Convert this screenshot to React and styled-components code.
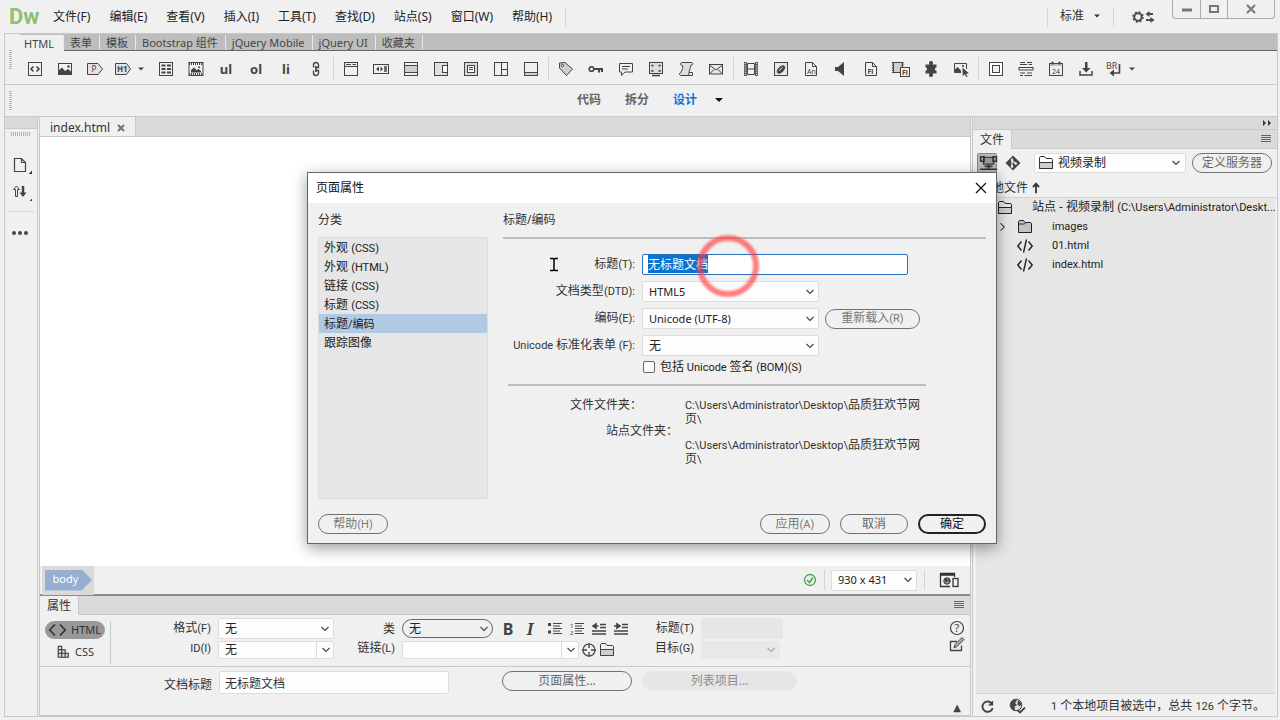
import React, { useEffect, useRef, useState } from 'react';
import styled, { createGlobalStyle } from 'styled-components';

const menus = ['文件(F)', '编辑(E)', '查看(V)', '插入(I)', '工具(T)', '查找(D)', '站点(S)', '窗口(W)', '帮助(H)'];
const insertTabs = ['HTML', '表单', '模板', 'Bootstrap 组件', 'jQuery Mobile', 'jQuery UI', '收藏夹'];
const views = ['代码', '拆分', '设计'];

const tools = [
  ['code', 'image', 'paragraph', 'heading', 'table', 'figure', 'ul', 'ol', 'li', 'link'],
  ['header', 'nav', 'main', 'aside', 'article', 'section', 'footer'],
  ['tag', 'key', 'comment', 'viewport', 'script', 'mail'],
  ['film', 'edge', 'animate', 'sound', 'flash', 'flashVideo', 'plugin', 'rollover'],
  ['div', 'rule', 'date', 'save', 'br'],
];

const categories = [
  ['外观', '(CSS)'],
  ['外观', '(HTML)'],
  ['链接', '(CSS)'],
  ['标题', '(CSS)'],
  ['标题', '/编码'],
  ['跟踪图像', ''],
];

const icons = {
  code: <>
    <rect x="1.5" y="1.5" width="13" height="13" />
    <path d="M6.5 5.5 4 8l2.5 2.5M9.5 5.5 12 8l-2.5 2.5" strokeWidth="1.6" />
  </>,
  image: <>
    <rect x="1.5" y="2.5" width="13" height="11" />
    <path d="M2 13V9l3-2.5L8 10l3-2 3.500 3V13z" fill="currentColor" stroke="none" />
    <circle cx="11.500" cy="5.500" r="1.200" fill="currentColor" stroke="none" />
  </>,
  paragraph: <>
    <path d="M.5 2.500h10.500L15.500 8 11 13.500H.5z" fill="#e2e2e2" />
    <text x="4.500" y="11">P</text>
  </>,
  heading: <>
    <path d="M.5 2.500h11L15.500 8l-4 5.500H.5z" fill="#e2e2e2" />
    <text x="2" y="11" fontWeight="700">H1</text>
  </>,
  table: <>
    <rect x="1.500" y="1.500" width="13" height="13" />
    <path d="M3.500 4.500h4M9 4.500h4M3.500 8h4M9 8h4M3.500 11.500h4M9 11.500h4" strokeWidth="1.800" />
  </>,
  figure: <>
    <rect x="1" y="1.500" width="14" height="13" />
    <path d="M1 3h14M1 13h14" strokeWidth="2" strokeDasharray="1 1" />
    <path d="M3 11.500V9l3-2.500 2.500 2.500 2-1 2.500 2v1.500z" fill="currentColor" stroke="none" />
    <circle cx="11" cy="6.300" r="1" fill="currentColor" stroke="none" />
  </>,
  link: <>
    <path d="M5.500 6.500V4a2.500 2.500 0 0 1 5 0v2.500H9M5.500 9.500V12a2.500 2.500 0 0 0 5 0V9.500H9" strokeWidth="1.400" />
    <path d="M8 5v6" strokeWidth="1.800" />
  </>,
  header: <>
    <rect x="1.500" y="1.500" width="13" height="13" />
    <path d="M1.500 5.500h13M3 3.500h5M9.500 3.500h3.500" />
  </>,
  nav: <>
    <rect x=".5" y="3.500" width="15" height="9" />
    <path d="M6 5.500v5L3 8zM7.500 5.500v5L10 8z" fill="currentColor" stroke="none" />
    <path d="M11 6h3M11 8h3M11 10h3" strokeWidth="1.300" />
  </>,
  main: <>
    <rect x="1.500" y="1.500" width="13" height="13" />
    <rect x="1.500" y="4.500" width="13" height="7" fill="#cfcfcf" />
  </>,
  aside: <>
    <rect x="1.500" y="1.500" width="13" height="13" fill="#e0e0e0" />
    <rect x="9.500" y="4.500" width="5" height="7" fill="#fafafa" />
  </>,
  article: <>
    <rect x="1.500" y="1.500" width="13" height="13" fill="#d8d8d8" />
    <rect x="4.500" y="4.500" width="7" height="7" fill="#fff" />
    <path d="M6 6.500h4M6 8.500h4" />
  </>,
  section: <>
    <rect x="1.500" y="1.500" width="13" height="13" />
    <path d="M8.500 1.500v13M8.500 8.500h6" />
  </>,
  footer: <>
    <rect x="1.500" y="1.500" width="13" height="13" />
    <path d="M2 11.500h12V14H2z" fill="#cfcfcf" stroke="none" />
    <path d="M1.500 11.500h13" />
  </>,
  tag: <>
    <path d="M1.500 2v5l7 7.500L14.500 8 7 1.500z" fill="#cfcfcf" />
    <circle cx="4.500" cy="4.500" r="1.200" fill="#f0f0f0" />
  </>,
  key: <>
    <circle cx="3.500" cy="8" r="2.300" strokeWidth="1.600" />
    <path d="M6 8h9M11 8v3.500M14 8v3" strokeWidth="2" />
  </>,
  comment: <>
    <path d="M1.500 2.500h13v8.500H7l-3.500 3.500V11h-2z" />
    <path d="M4 5.500h8M4 8h6" />
  </>,
  viewport: <>
    <rect x="1.500" y="1.500" width="13" height="11" fill="#dedede" />
    <path d="M4 5.500v-1h1.500M10.500 4.500H12v1M12 9v1h-1.500M5.500 10H4V9M4 14.500h8" strokeWidth="1.300" />
  </>,
  script: <>
    <path d="M4 1.500h9.500c2 0 1.500 3-.5 2.500-.5 3-2 6-2 8 0 3-2 2.500-2.500 2.500H3c-2 0-2-3 0-3 1-3 2.500-5 1.500-7C2 5 2 1.500 4 1.500z" fill="#dedede" />
    <path d="M11 11.500h3.500v3H8" />
  </>,
  mail: <>
    <rect x="1.500" y="3.500" width="13" height="9.500" fill="#e6e6e6" />
    <path d="M2 4.500 8 9l6-4.500M2 12.500l4-4M14 12.500l-4-4" />
  </>,
  film: <>
    <path d="M4.500 2.500h7v11h-7zM4.500 8h7" />
    <path d="M2.500 1v14M13.500 1v14" strokeWidth="2.600" />
    <path d="M2.500 2v13M13.500 2v13" stroke="#f0f0f0" strokeWidth="1" strokeDasharray="1 1.200" />
  </>,
  edge: <>
    <rect x="1.500" y="1.500" width="13" height="13" fill="#e6e6e6" />
    <ellipse cx="8" cy="8.500" rx="4.500" ry="2.300" transform="rotate(-45 8 8.500)" fill="currentColor" />
    <path d="m6 10 3.500-4" stroke="#e6e6e6" />
  </>,
  animate: <>
    <path d="M2.500 1.500h7l4 4v9h-11zM9.500 1.500v4h4" />
    <text x="4" y="13" fontSize="7">An</text>
  </>,
  sound: <path d="M2 6h3l6-5v14l-6-5H2z" fill="currentColor" stroke="none" />,
  flash: <>
    <path d="M2.500 1.500h7l4 4v9h-11zM9.500 1.500v4h4" />
    <text x="4.500" y="13" fontSize="7" fontWeight="700">Fl</text>
  </>,
  flashVideo: <>
    <rect x="1.500" y="1.500" width="9" height="10" fill="#cfcfcf" />
    <path d="M1 1v11M10.500 1v6" strokeWidth="2" strokeDasharray="1.500 1" />
    <rect x="8.500" y="6.500" width="9" height="9" fill="#f0f0f0" />
    <text x="10" y="14" fontSize="7" fontWeight="700">Fl</text>
  </>,
  plugin: <path d="M8 0C6 0 5.500 2 6.500 3.500H2.500v3c2-.8 2 3.800 0 3v3h4C5.500 14 6 16 8 16s2.500-2 1.500-3.500h4v-3c-2 .8-2-3.800 0-3v-3h-4C10.500 2 10 0 8 0z" fill="currentColor" stroke="none" />,
  rollover: <>
    <path d="M8 11.500H1.500v-9h12V8" />
    <path d="M2 11V8.500L4.500 6 8 9.500V11z" fill="currentColor" stroke="none" />
    <circle cx="10" cy="5" r="1.100" fill="currentColor" stroke="none" />
    <path d="m9.500 6.500 6.500 6-3 .3 1.500 2.700-1.300.5-1.500-2.700-2 1.700z" fill="currentColor" stroke="none" />
  </>,
  div: <>
    <rect x="1.500" y="1.500" width="13" height="13" fill="#fff" />
    <rect x="4.500" y="4.500" width="7" height="7" fill="#f0f0f0" />
  </>,
  rule: <>
    <path d="M2 1.500h5M9 1.500h5M2 3.500h7M10.500 3.500H14M2 12h5M9 12h5M2 14.500h3M6.500 14.500H14" />
    <rect x="1" y="6.500" width="14" height="2.500" />
  </>,
  date: <>
    <rect x="1.500" y="2.500" width="13" height="12" />
    <path d="M2 4h12" stroke="#c4c4c4" strokeWidth="2" />
    <path d="M4.500.500v3M11.500.500v3" strokeWidth="1.800" />
    <text x="4" y="12.500" fontSize="7">24</text>
  </>,
  save: <>
    <path d="M2 10v4h12v-4" strokeWidth="1.500" />
    <path d="M7 1h2.500v6h3L8.200 11.500 4 7h3z" fill="currentColor" stroke="none" />
  </>,
  br: <>
    <text x="0" y="8" fontSize="9">BR</text>
    <path d="M13.500 3v9H6" strokeWidth="1.600" />
    <path d="M8 8.500v7L3.500 12z" fill="currentColor" stroke="none" />
  </>,
  page: <path d="M2.500 1.500h7l4 4v9h-11zM9.500 1.500v4h4" strokeWidth="1.200" />,
  transfer: <>
    <path d="M3.500 12.500v-7h-2L4.500 2l3 3.500h-2v7z" />
    <path d="M11 2v7" strokeWidth="2.500" />
    <path d="M7.500 8.500h7L11 13z" fill="currentColor" stroke="none" />
  </>,
  gear: <>
    <circle cx="6" cy="8" r="3.700" strokeWidth="2" />
    <circle cx="6" cy="8" r="5" strokeWidth="1.500" strokeDasharray="2 1.930" />
    <path d="M16 5h5M14 11h5" strokeWidth="2" />
    <path d="M17.500 2v6l-4-3zM18.500 8v6l4-3z" fill="currentColor" stroke="none" />
  </>,
  server: <>
    <rect x="4" y="3" width="9" height="6" fill="#999" />
    <path d="M1.500 2.500h3v4h-3zM12.500 2.500h3v4h-3zM8.500 9v4.500M5 11h7M1 13.500h15" strokeWidth="1.400" />
  </>,
  git: <>
    <path d="m8 .5 7.500 7.500L8 15.500.5 8z" fill="currentColor" stroke="none" />
    <path d="M7 3.500v9M7 5.500l3.500 3" stroke="#eee" strokeWidth="1.200" />
    <g fill="#eee" stroke="none"><circle cx="7" cy="5" r="1.200" /><circle cx="7" cy="11.500" r="1.200" /><circle cx="10.800" cy="8.500" r="1.200" /></g>
  </>,
  folder: <>
    <path d="M1.500 13.500V3c0-1 .5-1.500 1.500-1.500h3.500l1.500 2h5c1 0 1.500.5 1.500 1.500v8.500z" />
    <path d="M1.500 7.500h13v6h-13z" fill="#cfcfcf" />
  </>,
  folderGray: <path d="M1.500 13.500V3c0-1 .5-1.500 1.500-1.500h3.500l1.500 2h5c1 0 1.500.5 1.500 1.500v8.500zM2 5h5.500L9 3.500" fill="#c2c2c2" />,
  tags: <path d="M4.500 3.500.8 8l3.700 4.500M11.500 3.500 15.200 8l-3.700 4.500M9.500 1.500l-3 13" strokeWidth="1.400" />,
  refresh: <>
    <path d="M13 5.500A5.500 5.500 0 1 0 13.500 9.500" strokeWidth="2" />
    <path d="M14 1.500v5.500H8.500z" fill="currentColor" stroke="none" />
  </>,
  globe: <>
    <circle cx="7" cy="7" r="5.800" fill="#ddd" />
    <path d="M1.500 5 5 1.500l3 1L6 5l2 2-2.500 1.500L6 11l-1 1.500Q1.500 10.500 1.500 5zM9 2l3.500 3.500-1.500 3-2.500-2z" fill="currentColor" stroke="none" />
    <path d="m8.500 12 2.500 2.500 5-5" strokeWidth="1.800" />
  </>,
  html: <path d="M6 2.500.800 8 6 13.500M11 2.500 16.200 8 11 13.500" strokeWidth="1.700" />,
  css: <path d="M2.500 1.500h4v12.500h-4zM2.500 5.500h8V14M2.500 9.500H14V14H2.500" fill="#dadada" strokeWidth="1.200" />,
  ulist: <>
    <path d="M1 3.500h3M1 11h3" strokeWidth="3" />
    <path d="M6 2.500h9M6 5h7M6 7.500h9M6 10h7M6 12.500h9" strokeWidth="1.200" />
  </>,
  olist: <>
    <path d="M6 2.500h9M6 5h7M6 7.500h9M6 10h7M6 12.500h9" strokeWidth="1.200" />
    <text x="1" y="7" fontSize="6">1</text><text x="1" y="14" fontSize="6">2</text>
  </>,
  outdent: <path d="M9 3.500h6M9 6.500h6M1 10h14M1 13h14M2 5h5.500M5 3v4L2 5z" strokeWidth="1.600" />,
  indent: <path d="M9 3.500h6M9 6.500h6M1 10h14M1 13h14M1 5h5.500M4 3v4l3-2z" strokeWidth="1.600" />,
  target: <>
    <circle cx="8" cy="8" r="6" strokeWidth="1.200" />
    <path d="M8 1v5M8 10v5M1 8h5M10 8h5" strokeWidth="1.400" />
  </>,
  help: <>
    <circle cx="8" cy="8" r="6.500" strokeWidth="1.200" />
    <text x="5.500" y="12" fontSize="11">?</text>
  </>,
  edit: <>
    <path d="M8 5.500H1.500v9h11V9.500" strokeWidth="1.300" />
    <path d="m5 12 1-3.500L13 1.500l2 2-7 7z" fill="#aaa" />
  </>,
  device: <>
    <path d="M11 14.500H1.500v-13h14V5" strokeWidth="1.300" />
    <path d="M1 2.500h15" strokeWidth="2.500" />
    <circle cx="8" cy="9" r="3.200" fill="#999" />
    <path d="m5.500 8 2-1.500 1 1.500-1 2.500zM9 7l2 1.500-1.500 2z" fill="currentColor" stroke="none" />
    <rect x="14" y="6.500" width="5" height="8" fill="#f0f0f0" strokeWidth="1.300" />
  </>,
  check: <>
    <circle cx="8" cy="8" r="5.500" strokeWidth="1.300" />
    <path d="m5 8 2.500 2.500L11 5.500" strokeWidth="1.500" />
  </>,
  chevron: <path d="m4.500 6 3.500 3.500L11.500 6" strokeWidth="1.100" />,
  close: <path d="m3 3 10 10M13 3 3 13" strokeWidth="1.300" />,
  smallClose: <path d="m5 5 6 6M11 5l-6 6" strokeWidth="2.200" />,
  up: <path d="M8 14V4M4.500 7 8 3l3.500 4" strokeWidth="2" />,
  menu: <path d="M3 4.500h10M3 6.500h10M3 8.500h10M3 10.500h10" />,
  more: <path d="m4 5 3 3-3 3zM9 5l3 3-3 3z" fill="currentColor" stroke="none" />,
  right: <path d="m6 3 5 5-5 5" strokeWidth="1.400" />,
  dots: <path d="M0 8h16" strokeWidth="4" strokeLinecap="round" strokeDasharray="0 6" transform="translate(2 0)" />,
  caret: <path d="M4 6h8l-4 4z" fill="currentColor" stroke="none" />,
  minimize: <path d="M3 9h10" strokeWidth="3" />,
  maximize: <rect x="4" y="5" width="8" height="6" strokeWidth="2" />,
  xmark: <path d="m4 4 8 8M12 4l-8 8" strokeWidth="2" />,
  ibeam: <path d="M4 2.500h3l1 1 1-1h3M8 3.500v10M4 14.500h3l1-1 1 1h3" stroke="#000" strokeWidth="1.500" />,
};

function Icon({ name, width = 16, size = 16, className }) {
  return <Svg className={className} width={width * size / 16} height={size} viewBox={`0 0 ${width} 16`} aria-hidden="true">
    {icons[name]}
  </Svg>
}

function Select({ label, options, ...rest }) {
  return <SelectWrap {...rest}>
    <select aria-label={label} disabled={rest.$off}>
      {options.map(o => <option key={o}>{o}</option>)}
    </select>
    <span className="arrow"><Icon name="chevron" /></span>
  </SelectWrap>
}

function ToolButton({ name }) {
  const dropdown = name === 'heading' || name === 'br'
  if (['ul', 'ol', 'li'].includes(name)) return <Tool><b>{name}</b></Tool>
  return <Tool $wide={dropdown} aria-label={name}>
    <Icon name={name} width={name === 'flashVideo' ? 18 : 16} />
    {dropdown && <Icon name="caret" size={12} />}
  </Tool>
}

function PageProperties() {
  const [active, setActive] = useState(4)
  const title = useRef(null)

  useEffect(() => {
    title.current.focus()
    title.current.select()
  }, [])

  return <Dialog role="dialog" aria-label="页面属性">
    <DialogTitle>
      <span>页面属性</span>
      <IconButton aria-label="关闭"><Icon name="close" /></IconButton>
    </DialogTitle>
    <DialogBody>
      <div>
        <Heading>分类</Heading>
        <CategoryList>
          {categories.map(([name, suffix], i) => (
            <Category key={name + suffix} $active={i === active} onClick={() => setActive(i)}>
              {name}{suffix.startsWith('(') && ' '}<Latin>{suffix}</Latin>
            </Category>
          ))}
        </CategoryList>
      </div>
      <div>
        <Heading>标题/编码</Heading>
        <Rule />
        <Form>
          <label htmlFor="doc-title">标题<Latin>(T):</Latin></label>
          <TitleInput id="doc-title" ref={title} defaultValue="无标题文档" />
          <span>文档类型<Latin>(DTD):</Latin></span>
          <Select label="文档类型" options={['HTML5']} $width={177} $latin />
          <span>编码<Latin>(E):</Latin></span>
          <Inline>
            <Select label="编码" options={['Unicode (UTF-8)']} $width={177} $latin />
            <PillButton $width={95} $soft>重新载入<Latin>(R)</Latin></PillButton>
          </Inline>
          <span><Latin>Unicode </Latin>标准化表单<Latin> (F):</Latin></span>
          <Select label="标准化表单" options={['无']} $width={177} />
        </Form>
        <CheckRow>
          <input type="checkbox" />
          <span>包括<Latin> Unicode </Latin>签名<Latin> (BOM)(S)</Latin></span>
        </CheckRow>
        <Rule $inset />
        <Folders>
          <dt>文件文件夹：</dt>
          <dd>
            <div><Latin>C:\Users\Administrator\Desktop\</Latin>品质狂欢节网</div>
            <div>页<Latin>\</Latin></div>
          </dd>
          <dt className="site">站点文件夹：</dt>
          <dd>
            <div><Latin>C:\Users\Administrator\Desktop\</Latin>品质狂欢节网</div>
            <div>页<Latin>\</Latin></div>
          </dd>
        </Folders>
      </div>
    </DialogBody>
    <DialogFooter>
      <PillButton $width={70} $soft>帮助<Latin>(H)</Latin></PillButton>
      <Spacer />
      <PillButton $width={70} $soft>应用<Latin>(A)</Latin></PillButton>
      <PillButton $width={68}>取消</PillButton>
      <PillButton $width={68} $primary>确定</PillButton>
    </DialogFooter>
    <Cursor><Icon name="ibeam" /></Cursor>
    <ClickRing />
  </Dialog>
}

function FilesPanel() {
  return <Files>
    <FilesStrip><Icon name="more" /></FilesStrip>
    <PanelTabs><PanelTab>文件</PanelTab><Spacer /><Icon name="menu" /></PanelTabs>
    <FilesBar>
      <Pressed aria-label="server"><Icon name="server" width={17} size={18} /></Pressed>
      <IconButton aria-label="git"><Icon name="git" /></IconButton>
      <SiteSelect>
        <Icon name="folder" />
        <Select label="站点" options={['视频录制']} $site />
      </SiteSelect>
      <PillButton $width={80}>定义服务器</PillButton>
    </FilesBar>
    <FilesHeader><span>本地文件</span><Icon name="up" size={14} /></FilesHeader>
    <Tree>
      <TreeRow $root><Icon name="folder" /><span>站点 - 视频录制 <Latin>(C:\Users\Administrator\Deskt...</Latin></span></TreeRow>
      <TreeRow><Icon name="right" size={12} /><Icon name="folderGray" /><Latin>images</Latin></TreeRow>
      <TreeRow><i /><Icon name="tags" /><Latin>01.html</Latin></TreeRow>
      <TreeRow><i /><Icon name="tags" /><Latin>index.html</Latin></TreeRow>
    </Tree>
    <FilesStatus>
      <IconButton aria-label="刷新"><Icon name="refresh" size={15} /></IconButton>
      <IconButton aria-label="globe"><Icon name="globe" width={17} /></IconButton>
      <span><Latin>1</Latin> 个本地项目被选中，总共 <Latin>126</Latin> 个字节。</span>
    </FilesStatus>
  </Files>
}

function PropertiesPanel() {
  return <Properties>
    <PanelTabs><PanelTab>属性</PanelTab><Spacer /><Icon name="menu" /></PanelTabs>
    <PropertyRow>
      <Modes>
        <Mode $active><Icon name="html" width={17} />HTML</Mode>
        <Mode><Icon name="css" size={14} />CSS</Mode>
      </Modes>
      <FieldGroup $label={100}>
        <span>格式<Latin>(F)</Latin></span>
        <Select label="格式" options={['无']} $width={116} />
        <span><Latin>ID(I)</Latin></span>
        <Select label="ID" options={['无']} $width={116} $split $short />
      </FieldGroup>
      <FieldGroup $label={61}>
        <span>类</span>
        <Inline>
          <Select label="类" options={['无']} $width={91} $round />
          <TextTools>
            <IconButton><b>B</b></IconButton>
            <IconButton><em>I</em></IconButton>
            <IconButton aria-label="ul"><Icon name="ulist" /></IconButton>
            <IconButton aria-label="ol"><Icon name="olist" /></IconButton>
            <IconButton aria-label="outdent"><Icon name="outdent" /></IconButton>
            <IconButton aria-label="indent"><Icon name="indent" /></IconButton>
          </TextTools>
        </Inline>
        <span>链接<Latin>(L)</Latin></span>
        <Inline $gap={2}>
          <Select label="链接" options={['']} $width={177} $split $short />
          <IconButton aria-label="target"><Icon name="target" /></IconButton>
          <IconButton aria-label="folder"><Icon name="folder" /></IconButton>
        </Inline>
      </FieldGroup>
      <FieldGroup $label={65}>
        <label htmlFor="link-title">标题<Latin>(T)</Latin></label>
        <DisabledInput id="link-title" disabled />
        <span>目标<Latin>(G)</Latin></span>
        <Select label="目标" options={['']} $width={79} $off $short />
      </FieldGroup>
      <Spacer />
      <SideIcons>
        <IconButton aria-label="帮助"><Icon name="help" /></IconButton>
        <IconButton aria-label="编辑"><Icon name="edit" /></IconButton>
      </SideIcons>
    </PropertyRow>
    <DocumentRow>
      <label htmlFor="page-title">文档标题</label>
      <PageTitle id="page-title" defaultValue="无标题文档" />
      <PillButton $width={130}>页面属性...</PillButton>
      <PillButton $width={155} disabled>列表项目...</PillButton>
      <Spacer />
      <IconButton className="collapse" aria-label="collapse">▲</IconButton>
    </DocumentRow>
  </Properties>
}

function App() {
  const [view, setView] = useState('设计')

  return <>
    <GlobalStyle />
    <Shell>
      <TitleBar>
        <Logo>Dw</Logo>
        <Menu>{menus.map(m => <button key={m}>{m}</button>)}</Menu>
        <Divider $height={20} />
        <Spacer />
        <Divider $height={20} />
        <Workspace>标准<Icon name="caret" size={12} /></Workspace>
        <Divider $height={20} />
        <Settings aria-label="settings"><Icon name="gear" width={24} /></Settings>
        <WindowButtons>
          <button aria-label="最小化"><Icon name="minimize" /></button>
          <button aria-label="最大化"><Icon name="maximize" /></button>
          <button className="wide" aria-label="关闭"><Icon name="xmark" /></button>
        </WindowButtons>
      </TitleBar>
      <Workbench>
        <InsertPanel>
          <Grip />
          <InsertBody>
            <InsertTabs>
              {insertTabs.map((t, i) => <InsertTab key={t} $active={i === 0}>{t}</InsertTab>)}
            </InsertTabs>
            <Toolbar>
              {tools.map((group, i) => <React.Fragment key={i}>
                {i > 0 && <Divider $height={23} $space={2} />}
                {group.map(t => <ToolButton key={t} name={t} />)}
              </React.Fragment>)}
            </Toolbar>
          </InsertBody>
        </InsertPanel>
        <ViewBar>
          <Grip />
          <nav>
            {views.map(v => <ViewButton key={v} $active={v === view} onClick={() => setView(v)}>{v}</ViewButton>)}
            <IconButton aria-label="视图"><Icon name="caret" /></IconButton>
          </nav>
        </ViewBar>
        <Main>
          <SideTools>
            <div className="strip" />
            <div className="grip" />
            <button className="corner" aria-label="打开文档"><Icon name="page" /></button>
            <button className="corner" aria-label="文件管理"><Icon name="transfer" /></button>
            <hr />
            <button aria-label="自定义"><Icon name="dots" width={18} /></button>
          </SideTools>
          <Center>
            <DocTabs><DocTab>index.html<Icon name="smallClose" /></DocTab></DocTabs>
            <Canvas />
            <StatusBar>
              <TagCrumb><button>body</button></TagCrumb>
              <Spacer />
              <Ok><Icon name="check" /></Ok>
              <Divider $height={20} $space={6} />
              <Select label="窗口大小" options={['930 x 431']} $width={86} $latin />
              <Divider $height={20} $space={7} />
              <Preview aria-label="预览"><Icon name="device" width={19} /></Preview>
            </StatusBar>
            <PropertiesPanel />
          </Center>
          <FilesPanel />
        </Main>
      </Workbench>
      <PageProperties />
    </Shell>
  </>
}

export default App;

const GlobalStyle = createGlobalStyle`
  *{
    box-sizing: border-box;
  }
  body{
    margin: 0;
    background: #f0f0f0;
    color: #333;
    font: 12px/16px "Noto Sans", "Noto Sans CJK SC", sans-serif;
  }
  button, input, select{
    font: inherit;
    color: inherit;
    padding: 0;
    margin: 0;
  }
  button{
    border: 0;
    background: none;
    white-space: nowrap;
  }
`

const Svg = styled.svg`
  flex: none;
  display: block;
  fill: none;
  stroke: currentColor;
  overflow: visible;
  text{
    fill: currentColor;
    stroke: none;
    font-family: "Noto Sans", sans-serif;
    font-size: 8px;
  }
  text[font-size="6"]{ font-size: 6px; }
  text[font-size="7"]{ font-size: 7px; }
  text[font-size="9"]{ font-size: 9px; }
  text[font-size="11"]{ font-size: 11px; }
`

const Latin = styled.span`
  font-family: Roboto, "Noto Sans CJK SC", sans-serif;
  font-size: 11px;
  white-space: pre;
`

const Spacer = styled.div`
  flex: 1;
`

const Divider = styled.div`
  flex: none;
  width: 1px;
  height: ${p => p.$height}px;
  margin: 0 ${p => p.$space || 0}px;
  background: #d4d4d4;
`

const Inline = styled.div`
  display: flex;
  align-items: center;
  gap: ${p => p.$gap || 6}px;
`

const IconButton = styled.button`
  display: flex;
  align-items: center;
  justify-content: center;
  color: #444;
`

const PillButton = styled.button`
  width: ${p => p.$width}px;
  height: 20px;
  line-height: 16px;
  border: ${p => p.$primary ? '2px solid #222' : '1px solid #707070'};
  border-radius: 10px;
  color: ${p => p.$primary ? '#111' : p.$soft ? '#777' : '#666'};
  &:disabled{
    border-color: #e6e6e6;
    background: #e6e6e6;
    color: #8c8c8c;
  }
`

const SelectWrap = styled.div`
  position: relative;
  width: ${p => p.$width ? p.$width + 'px' : '100%'};
  select{
    appearance: none;
    display: block;
    width: 100%;
    height: ${p => p.$short ? 18 : 21}px;
    padding: 0 24px 0 ${p => p.$site ? 4 : 6}px;
    border: 1px solid ${p => p.$round ? '#666' : '#dcdcdc'};
    border-radius: ${p => p.$round ? 10 : 2}px;
    background: ${p => p.$round ? '#f0f0f0' : '#fdfdfd'};
    outline: 0;
    color: #222;
    ${p => p.$latin && 'font-size: 11px;'}
    ${p => p.$round && 'height: 19px;'}
    ${p => p.$site && 'border: 0; background: none; height: 18px;'}
    ${p => p.$off && 'background: #e6e6e6; border-color: #e6e6e6;'}
  }
  .arrow{
    position: absolute;
    top: 0;
    right: 0;
    bottom: 0;
    width: 18px;
    display: flex;
    align-items: center;
    justify-content: center;
    border-left: ${p => p.$split ? '1px solid #dcdcdc' : '0'};
    color: ${p => p.$off ? '#aaa' : '#444'};
    pointer-events: none;
  }
`

const Shell = styled.div`
  position: relative;
  display: flex;
  flex-direction: column;
  height: 100vh;
  padding: 0 2px 3px 4px;
  overflow: hidden;
`

const TitleBar = styled.header`
  flex: none;
  display: flex;
  align-items: center;
  height: 33px;
  padding-left: 5px;
`

const Logo = styled.div`
  width: 44px;
  color: #8fbf73;
  font: bold 22px/30px Roboto, sans-serif;
`

const Menu = styled.nav`
  display: flex;
  gap: 19px;
  margin-right: 13px;
  button{
    color: #222;
  }
`

const Workspace = styled.button`
  display: flex;
  align-items: center;
  gap: 7px;
  width: 65px;
  padding: 0 0 2px 12px;
`

const Settings = styled.button`
  width: 58px;
  padding-left: 18px;
  color: #4a4a4a;
`

const WindowButtons = styled.div`
  display: flex;
  align-self: flex-start;
  height: 19px;
  margin-right: 3px;
  border: 1px solid #aaa;
  border-top: 0;
  border-radius: 0 0 4px 4px;
  button{
    width: 27px;
    display: flex;
    justify-content: center;
    align-items: center;
    color: #777;
    border-left: 1px solid #aaa;
    &:first-child{
      border: 0;
    }
    &.wide{
      width: 47px;
    }
  }
`

const Workbench = styled.div`
  flex: 1;
  min-height: 0;
  display: flex;
  flex-direction: column;
  border: 1px solid #c8c8c8;
`

const InsertPanel = styled.section`
  flex: none;
  display: flex;
  height: 51px;
  border-bottom: 1px solid #c8c8c8;
`

const Grip = styled.div`
  align-self: center;
  width: 3px;
  height: 19px;
  margin: 0 8px 0 4px;
  background: repeating-linear-gradient(#b4b4b4 0 1px, #f0f0f0 1px 2px);
`

const InsertBody = styled.div`
  flex: 1;
  min-width: 0;
`

const InsertTabs = styled.div`
  display: flex;
  height: 17px;
  padding-top: 1px;
  background: #bdbdbd;
  border-bottom: 1px solid #666;
`

const InsertTab = styled.button`
  height: ${p => p.$active ? 16 : 15}px;
  padding: ${p => p.$active ? '0 9px 0 4px' : '0 7px 0 6px'};
  border-right: 1px solid #e8e8e8;
  background: ${p => p.$active ? '#f0f0f0' : 'transparent'};
  color: #444;
  font-size: 11px;
  line-height: 15px;
`

const Toolbar = styled.div`
  display: flex;
  align-items: center;
  height: 33px;
  padding-top: 2px;
`

const Tool = styled.button`
  display: flex;
  align-items: center;
  justify-content: center;
  gap: 4px;
  width: ${p => p.$wide ? 41 : 30}px;
  height: 24px;
  color: #444;
  b{
    font: bold 13px/24px "Noto Sans", sans-serif;
  }
`

const ViewBar = styled.section`
  flex: none;
  display: flex;
  height: 32px;
  border-bottom: 1px solid #c8c8c8;
  nav{
    flex: 1;
    display: flex;
    justify-content: center;
    align-items: center;
    gap: 24px;
    padding: 0 0 2px 7px;
  }
`

const ViewButton = styled.button`
  color: ${p => p.$active ? '#1473d6' : '#666'};
  font-weight: 700;
  & + ${IconButton}{
    margin-left: -10px;
    color: #111;
  }
`

const Main = styled.main`
  flex: 1;
  min-height: 0;
  display: flex;
`

const SideTools = styled.aside`
  flex: none;
  width: 33px;
  border-right: 1px solid #c8c8c8;
  color: #444;
  .strip{
    height: 12px;
    background: #dadada;
    border-bottom: 1px solid #c8c8c8;
  }
  .grip{
    width: 20px;
    height: 4px;
    margin: 3px 0 15px 6px;
    background: repeating-linear-gradient(90deg, #b4b4b4 0 1px, #f0f0f0 1px 2px);
  }
  button{
    display: block;
    width: 28px;
    height: 27px;
    padding-left: 7px;
  }
  .corner{
    background: linear-gradient(135deg, transparent 50%, #444 50%) 24px 20px / 3px 3px no-repeat;
  }
  hr{
    margin: 6px 3px 7px;
    border: 0;
    border-top: 1px solid #d4d4d4;
  }
`

const Center = styled.div`
  flex: 1;
  min-width: 0;
  display: flex;
  flex-direction: column;
  margin-left: 1px;
  border: solid #c8c8c8;
  border-width: 0 1px;
`

const DocTabs = styled.div`
  flex: none;
  display: flex;
  height: 20px;
  background: #dadada;
  border-bottom: 1px solid #c8c8c8;
`

const DocTab = styled.div`
  display: flex;
  align-items: center;
  gap: 3px;
  padding: 2px 6px 0 10px;
  border-right: 1px solid #c8c8c8;
  background: #f0f0f0;
  svg{
    color: #777;
  }
`

const Canvas = styled.div`
  flex: 1;
  background: #fff;
`

const StatusBar = styled.div`
  flex: none;
  display: flex;
  align-items: center;
  height: 30px;
  border-bottom: 2px solid #8c8c8c;
  padding: 0 2px;
`

const TagCrumb = styled.div`
  padding: 4px 2px 4px 3px;
  background: #dadada;
  button{
    display: block;
    width: 47px;
    height: 21px;
    padding: 0 6px 2px 0;
    background: #96aecf;
    clip-path: polygon(0 0, 78% 0, 100% 50%, 78% 100%, 0 100%);
    color: #fff;
    font-size: 11px;
  }
`

const Ok = styled.span`
  color: #45a845;
`

const Preview = styled.button`
  width: 36px;
  padding-left: 7px;
`

const Properties = styled.section`
  flex: none;
  border-bottom: 1px solid #c8c8c8;
`

const PanelTabs = styled.div`
  flex: none;
  display: flex;
  align-items: center;
  height: 19px;
  padding-right: 3px;
  background: #dadada;
  border-bottom: 1px solid #c8c8c8;
  color: #666;
`

const PanelTab = styled.div`
  height: 19px;
  padding: 2px 7px;
  border-right: 1px solid #c8c8c8;
  background: #f0f0f0;
  color: #333;
`

const PropertyRow = styled.div`
  display: flex;
  height: 52px;
  padding: 3px 5px 0 5px;
  border-bottom: 1px solid #c8c8c8;
`

const Modes = styled.div`
  width: 66px;
  height: 43px;
  margin-top: 3px;
  border-right: 1px solid #c8c8c8;
`

const Mode = styled.button`
  display: flex;
  align-items: center;
  gap: 5px;
  width: 60px;
  height: 18px;
  margin-bottom: 4px;
  padding-left: ${p => p.$active ? 4 : 11}px;
  border-radius: 9px;
  background: ${p => p.$active ? '#999' : 'none'};
  font-size: 11px;
`

const FieldGroup = styled.div`
  display: grid;
  grid-template-columns: ${p => p.$label}px auto;
  grid-template-rows: 21px 19px;
  column-gap: 7px;
  row-gap: 1px;
  align-content: start;
  align-items: center;
  > span, > label{
    align-self: start;
    text-align: right;
    &:first-child{
      align-self: center;
    }
  }
`

const TextTools = styled.div`
  display: flex;
  align-items: center;
  gap: 6px;
  margin-left: 1px;
  ${IconButton}{
    width: 16px;
    &:nth-child(2){
      margin-right: 3px;
    }
  }
  b{
    font: bold 16px/20px "Noto Sans", sans-serif;
  }
  em{
    font: italic bold 16px/20px "Noto Serif", "DejaVu Serif", serif;
  }
`

const DisabledInput = styled.input`
  width: 82px;
  height: 21px;
  border: 0;
  border-radius: 2px;
  background: #e6e6e6;
`

const SideIcons = styled.div`
  padding-top: 2px;
`

const DocumentRow = styled.div`
  display: flex;
  height: 48px;
  padding: 4px 5px 1px 0;
  label{
    width: 172px;
    margin: 6px 7px 0 0;
    text-align: right;
  }
  ${PillButton}{
    margin-right: 10px;
  }
  .collapse{
    align-self: flex-end;
    width: 16px;
    font: 10px/12px "DejaVu Sans", sans-serif;
  }
`

const PageTitle = styled.input`
  width: 230px;
  height: 23px;
  margin: 0 53px 0 0;
  padding: 0 5px;
  border: 1px solid #dcdcdc;
  border-radius: 2px;
  background: #fdfdfd;
`

const Files = styled.aside`
  flex: none;
  width: 305px;
  display: flex;
  flex-direction: column;
  margin-left: 1px;
  border-left: 1px solid #c8c8c8;
`

const FilesStrip = styled.div`
  display: flex;
  justify-content: flex-end;
  align-items: center;
  height: 13px;
  padding-right: 2px;
  background: #dadada;
  border-bottom: 1px solid #c8c8c8;
`

const FilesBar = styled.div`
  display: flex;
  align-items: center;
  height: 29px;
  padding: 0 5px 1px 4px;
  ${IconButton}{
    width: 32px;
  }
  ${PillButton}{
    margin-left: 6px;
  }
`

const Pressed = styled.button`
  width: 20px;
  height: 20px;
  padding-left: 1px;
  border: 1px solid #888;
  border-radius: 2px;
  background: #b8b8b8;
`

const SiteSelect = styled.div`
  flex: 1;
  display: flex;
  align-items: center;
  height: 20px;
  margin-left: 5px;
  padding-left: 3px;
  border: 1px solid #dcdcdc;
  border-radius: 2px;
  background: #fdfdfd;
`

const FilesHeader = styled.div`
  display: flex;
  align-items: center;
  gap: 1px;
  height: 20px;
  padding-left: 7px;
  border-bottom: 1px solid #d4d4d4;
`

const Tree = styled.div`
  flex: 1;
  margin: 0 2px 0 3px;
  background: #e6e6e6;
  border-bottom: 1px solid #d4d4d4;
`

const TreeRow = styled.div`
  display: flex;
  align-items: center;
  height: 19px;
  padding-left: ${p => p.$root ? 21 : 20}px;
  white-space: nowrap;
  color: #222;
  i{
    width: 12px;
  }
  svg + svg, i + svg{
    margin-left: 9px;
  }
  > span{
    margin-left: 19px;
  }
`

const FilesStatus = styled.div`
  display: flex;
  align-items: center;
  height: 22px;
  padding: 2px 0 0 7px;
  gap: 14px;
  > span{
    margin-left: 11px;
    white-space: nowrap;
  }
`

const Dialog = styled.div`
  position: absolute;
  left: 307px;
  top: 172px;
  width: 690px;
  border: 1px solid #666;
  background: #f0f0f0;
  box-shadow: 0 4px 14px rgba(0, 0, 0, 0.4);
`

const DialogTitle = styled.div`
  display: flex;
  justify-content: space-between;
  align-items: center;
  height: 30px;
  padding: 0 7px 0 8px;
  background: #fff;
  color: #111;
  ${IconButton}{
    color: #111;
  }
`

const DialogBody = styled.div`
  display: grid;
  grid-template-columns: 170px 1fr;
  column-gap: 15px;
  padding: 9px 10px 0;
`

const Heading = styled.div`
  height: 25px;
`

const CategoryList = styled.ul`
  height: 262px;
  margin: 0;
  padding: 0;
  border: 1px solid #dcdcdc;
  border-radius: 2px;
  background: #e6e6e6;
  list-style: none;
`

const Category = styled.li`
  height: 19px;
  padding-left: 5px;
  line-height: 19px;
  background: ${p => p.$active ? '#b0cae6' : 'none'};
  color: #222;
`

const Rule = styled.div`
  height: 2px;
  margin: ${p => p.$inset ? '9px 60px 12px 5px' : '0 0 15px'};
  background: #bdbdbd;
`

const Form = styled.div`
  display: grid;
  grid-template-columns: 132px 1fr;
  column-gap: 7px;
  row-gap: 6px;
  align-items: center;
  > label, > span{
    text-align: right;
    white-space: nowrap;
  }
`

const TitleInput = styled.input`
  width: 266px;
  height: 21px;
  padding: 0 5px 1px;
  border: 1px solid #2a72c0;
  border-radius: 2px;
  background: #fff;
  outline: 0;
  &::selection{
    background: #0a74d0;
    color: #fff;
  }
`

const CheckRow = styled.label`
  display: flex;
  align-items: center;
  gap: 5px;
  height: 16px;
  margin: 3px 0 0 140px;
  color: #222;
  input{
    appearance: none;
    width: 12px;
    height: 12px;
    border: 1px solid #666;
    border-radius: 2px;
    background: #fafafa;
  }
`

const Folders = styled.dl`
  display: grid;
  grid-template-columns: 175px 243px;
  column-gap: 7px;
  row-gap: 12px;
  margin: 0;
  line-height: 13px;
  dt{
    padding-right: 36px;
    text-align: right;
    &.site{
      margin-top: -14px;
      padding: 0;
    }
  }
  dd{
    margin: 0;
    white-space: nowrap;
  }
`

const DialogFooter = styled.div`
  display: flex;
  gap: 10px;
  padding: 15px 10px 9px;
`

const Cursor = styled.span`
  position: absolute;
  left: 238px;
  top: 83px;
`

const ClickRing = styled.span`
  position: absolute;
  left: 389px;
  top: 62px;
  width: 62px;
  height: 62px;
  border: 6px solid rgba(255, 60, 60, 0.65);
  border-radius: 50%;
  filter: blur(1px);
  pointer-events: none;
`
